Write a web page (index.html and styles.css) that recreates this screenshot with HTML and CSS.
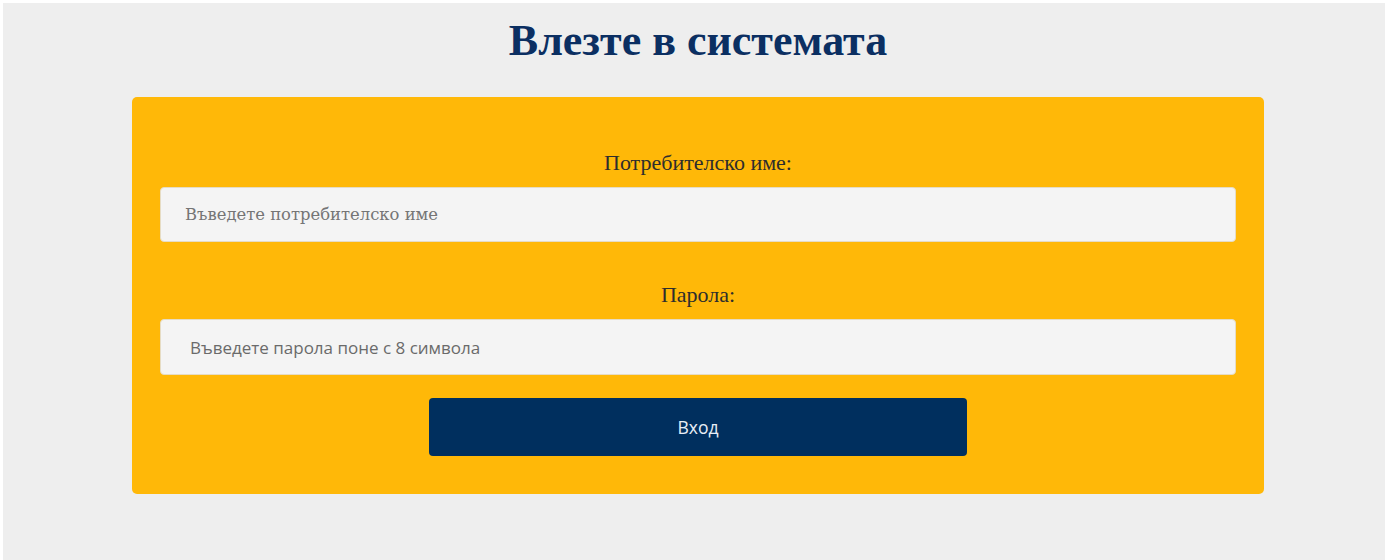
FILE: index.html
```html
<!DOCTYPE html>
<html lang="bg">
<head>
<meta charset="utf-8">
<title>Вход</title>
<link rel="stylesheet" href="styles.css">
</head>
<body>
<main class="page">
  <h1 class="title">Влезте в системата</h1>
  <form class="card">
    <label class="label" for="user">Потребителско име:</label>
    <input class="field field-serif" id="user" type="text" placeholder="Въведете потребителско име">
    <label class="label label-second" for="pass">Парола:</label>
    <input class="field field-sans" id="pass" type="password" placeholder="Въведете парола поне с 8 символа">
    <button class="btn" type="button">Вход</button>
  </form>
</main>
</body>
</html>
```

FILE: styles.css
```css
html, body {
  margin: 0;
  padding: 0;
  background: #ffffff;
}
body {
  padding: 3px 2px 0 3px;
  height: 560px;
  box-sizing: border-box;
}
.page {
  background: #eeeeee;
  height: 557px;
  padding: 0 0 0 8px;
  box-sizing: border-box;
  display: flex;
  flex-direction: column;
  align-items: center;
}
.title {
  margin: 13px 0 0;
  font-family: "Liberation Serif", "Times New Roman", serif;
  font-weight: bold;
  font-size: 44px;
  line-height: 50px;
  color: #0b2f62;
}
.card {
  margin-top: 31px;
  width: 1132px;
  box-sizing: border-box;
  background: #ffb808;
  border-radius: 5px;
  padding: 53px 28px 38px;
  display: flex;
  flex-direction: column;
  align-items: center;
}
.label {
  font-family: "Liberation Serif", "Times New Roman", serif;
  font-size: 22px;
  line-height: 26px;
  color: #2d2d2d;
  margin-bottom: 11px;
}
.label-second {
  margin-top: 40px;
}
.field {
  width: 100%;
  height: 55px;
  box-sizing: border-box;
  background: #f4f4f4;
  border: 1px solid #e6dcc4;
  border-radius: 4px;
  padding: 0 24px;
  color: #333;
  outline: none;
}
.field-serif {
  font-family: "DejaVu Serif", "Liberation Serif", serif;
  font-size: 16.4px;
}
.field-sans {
  padding-left: 29px;
  font-family: "Open Sans", "Noto Sans", sans-serif;
  font-size: 17px;
  height: 56px;
}
.field-serif::placeholder {
  color: #757575;
}
.field-sans::placeholder {
  color: #6a6a6a;
}
.btn {
  margin-top: 23px;
  width: 538px;
  height: 58px;
  background: #002f5e;
  color: #e8eef6;
  border: none;
  border-radius: 4px;
  font-family: "Open Sans", "Noto Sans", sans-serif;
  font-size: 17.5px;
  cursor: pointer;
}
```
